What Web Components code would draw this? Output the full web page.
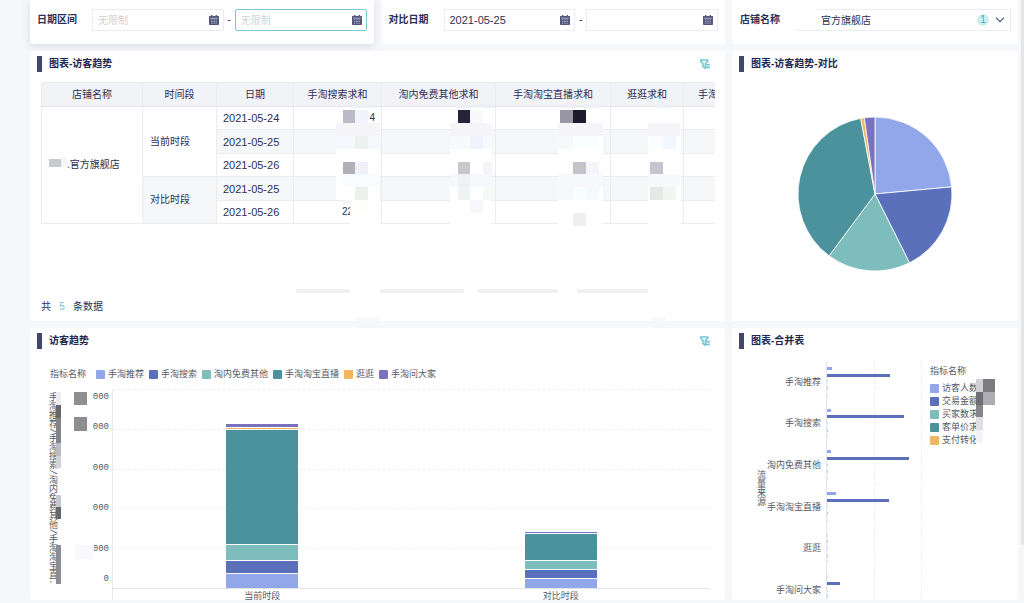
<!DOCTYPE html>
<html lang="zh-CN">
<head>
<meta charset="utf-8">
<meta name="viewport" content="width=device-width, initial-scale=1">
<title>访客趋势看板</title>
<style>
  :root {
    --ink: #2b2f56;
    --muted: #555a68;
    --line: #ebecf0;
    --accent: #6fc4d1;
    --c1: #91a7ea;
    --c2: #5b70bb;
    --c3: #7dbebc;
    --c4: #4b929d;
    --c5: #f0b75e;
    --c6: #7a72c0;
  }
  html { background: #f6f7fa; }
  body {
    margin: 0;
    font-family: "Liberation Sans", "Noto Sans CJK SC", sans-serif;
    font-size: 10px;
    line-height: 16px;
    color: var(--ink);
  }
</style>
</head>
<body>
<visitor-dashboard></visitor-dashboard>

<script>
const define = (name, html, setup) => {
  const tpl = document.createElement('template');
  tpl.innerHTML = html;
  customElements.define(name, class extends HTMLElement {
    connectedCallback() {
      if (this.shadowRoot) return;
      this.attachShadow({ mode: 'open' }).append(tpl.content.cloneNode(true));
      if (setup) setup(this, this.shadowRoot);
    }
  });
};

/* Privacy mask: "x y width height colour" cells separated by semicolons, in panel coordinates */
define('privacy-mask', `
  <style>
    :host { position: absolute; left: 0; top: 0; width: 100%; height: 100%; pointer-events: none; }
    svg { display: block; width: 100%; height: 100%; }
  </style>
  <svg aria-hidden="true" shape-rendering="crispEdges"></svg>`,
  (host, root) => {
    root.querySelector('svg').innerHTML = host.getAttribute('cells').split(';').map(s => s.trim()).filter(Boolean)
      .map(s => {
        const [x, y, w, h, c] = s.split(/\s+/);
        return `<rect x="${x}" y="${y}" width="${w}" height="${h}" fill="${c}"/>`;
      }).join('');
  });

define('filter-icon', `
  <style>
    :host { display: block; width: 10px; height: 10px; color: var(--accent); }
    svg { display: block; }
  </style>
  <svg width="10" height="10" viewBox="0 0 10 10" fill="none" stroke="currentColor" aria-hidden="true">
    <path d="M.7 1h7v1.200L5.400 4.400v4.800L3 7.600V4.400L.7 2.200z" stroke-width="1.500"/>
    <path d="M6.200 5.300h3.600M6.200 7h3.600M6.200 8.700h3.600" stroke-width="1.200"/>
  </svg>`);

define('calendar-icon', `
  <style>
    :host { display: block; width: 10px; height: 10px; flex: none; }
    svg { display: block; }
  </style>
  <svg width="10" height="10" viewBox="0 0 10 10" aria-hidden="true">
    <path d="M2 0h1.400v1h3.200V0H8v1h1.400q.6 0 .6.6v7.600q0 .8-.8.8H.8Q0 10 0 9.200V1.600Q0 1 .6 1H2z" fill="#51567a"/>
    <path d="M1.200 3.200h7.600" stroke="#c3c6d6" stroke-width=".8"/>
    <path d="M2 4.800h6M2 6.500h6M2 8.200h6" stroke="#b4b8cb" stroke-width=".8" stroke-dasharray="1.100 .5"/>
  </svg>`);

define('filter-card', `
  <style>
    :host {
      display: block; box-sizing: border-box; min-width: 0; padding: 9px 7px 13px;
      background: #fff; border-radius: 0 0 3px 3px;
    }
    :host([raised]) { box-shadow: 0 2px 8px rgba(60, 66, 100, .16); }
  </style>
  <slot></slot>`);

define('date-range', `
  <style>
    :host { display: flex; align-items: center; }
    label { flex: none; width: 55px; font-weight: bold; }
    .box {
      flex: 1; min-width: 0; display: flex; align-items: center; box-sizing: border-box;
      height: 22px; padding: 0 4px 0 5px; border: 1px solid var(--line); background: #fff;
    }
    .box.on { border-color: #79c8d6; border-radius: 2px; }
    input {
      flex: 1; min-width: 0; height: 20px; padding: 0; border: 0; outline: 0; background: none;
      font: 11px "Liberation Sans", "Noto Sans CJK SC", sans-serif; color: inherit;
    }
    input::placeholder { font-size: 10px; color: #cfd1da; opacity: 1; }
    .dash { flex: none; width: 11px; text-align: center; }
  </style>
  <label for="from"></label>
  <div class="box"><input id="from" type="text"><calendar-icon></calendar-icon></div>
  <span class="dash">-</span>
  <div class="box"><input id="to" type="text" aria-label="结束日期"><calendar-icon></calendar-icon></div>`,
  (host, root) => {
    root.querySelector('label').textContent = host.getAttribute('label');
    const [from, to] = root.querySelectorAll('input');
    from.value = host.getAttribute('from') || '';
    from.placeholder = to.placeholder = host.getAttribute('placeholder') || '';
    if (host.hasAttribute('end-active')) to.parentElement.classList.add('on');
  });

define('shop-select', `
  <style>
    :host { display: flex; align-items: center; padding-left: 1px; }
    label { flex: none; width: 56px; font-weight: bold; }
    .box { position: relative; flex: 1; min-width: 0; }
    select {
      display: block; width: 100%; height: 22px; box-sizing: border-box; padding: 0 44px 0 24px;
      appearance: none; border: 1px solid var(--line); border-radius: 2px; background: #fff;
      font: 10px "Liberation Sans", "Noto Sans CJK SC", sans-serif; color: inherit;
    }
    .adorn {
      position: absolute; right: 6px; top: 0; height: 22px; display: flex; align-items: center; gap: 6px;
      pointer-events: none;
    }
    b {
      width: 12px; height: 12px; border-radius: 6px; background: #cdeef0; color: #4aa9b8;
      font-size: 10px; line-height: 12px; font-weight: normal; text-align: center;
    }
    .veil { position: absolute; left: 0; top: 0; width: 21px; height: 20px; background: #fff; pointer-events: none; }
  </style>
  <label for="shop">店铺名称</label>
  <div class="box">
    <select id="shop"><option>官方旗舰店</option></select>
    <span class="veil"></span>
    <span class="adorn"><b>1</b>
      <svg width="10" height="6" viewBox="0 0 10 6" fill="none" stroke="#51567a" stroke-width="1.200" aria-hidden="true"><path d="M1 .7l4 4 4-4"/></svg>
    </span>
  </div>`);

define('chart-panel', `
  <style>
    :host {
      position: relative; display: flex; flex-direction: column; min-width: 0; overflow: hidden;
      background: #fff; border-radius: 3px;
    }
    header { display: flex; align-items: center; gap: 7px; height: 16px; padding: 5px 15px 10px 7px; }
    header::before { content: ""; width: 5px; height: 16px; background: #424769; }
    h2 { flex: 1; margin: 0; font-size: 10px; line-height: 18px; font-weight: bold; color: #232750; }
    button { padding: 0; border: 0; background: none; }
    .body { flex: 1; display: flex; flex-direction: column; min-height: 0; }
  </style>
  <header><h2></h2></header>
  <div class="body"><slot></slot></div>`,
  (host, root) => {
    root.querySelector('h2').textContent = host.getAttribute('heading');
    if (host.hasAttribute('filterable')) {
      const b = document.createElement('button');
      b.setAttribute('aria-label', '筛选');
      b.innerHTML = '<filter-icon></filter-icon>';
      root.querySelector('header').append(b);
    }
  });

define('visitor-table', `
  <style>
    :host { flex: 1; display: flex; flex-direction: column; padding: 0 10px 6px 11px; }
    .scroll { flex: 1; overflow: hidden; }
    table { border-collapse: collapse; table-layout: fixed; width: 757px; }
    th, td { box-sizing: border-box; height: 23px; padding: 0 6px; border: 1px solid var(--line); line-height: 16px; }
    th { height: 24px; padding: 1px 0 0; background: #f2f3f7; border-bottom-color: #e2e4e9; font-weight: normal; }
    td { font-size: 10px; text-align: right; }
    td.date { font-size: 11px; text-align: left; }
    td.name { padding: 0 7px; text-align: left; }
    td.shop { padding: 0 8px 0 25px; text-align: left; }
    tr.alt td { height: 24px; }
    tr.alt td:not(.name), td.shade { background: #f6f7f9; }
    .bar { display: flex; gap: 14px; margin: 0 67px 6px 255px; height: 4px; }
    .bar i { background: #f0f0f1; border-radius: 1px; }
    footer { display: flex; gap: 6px; }
    footer b { width: 10px; text-align: center; font-weight: normal; color: var(--accent); }
  </style>
  <div class="scroll">
    <table>
      <colgroup><col style="width:101px"><col style="width:74px"><col style="width:77px"><col style="width:88px"><col style="width:114px"><col style="width:115px"><col style="width:73px"><col style="width:115px"></colgroup>
      <thead><tr><th>店铺名称</th><th>时间段</th><th>日期</th><th>手淘搜索求和</th><th>淘内免费其他求和</th><th>手淘淘宝直播求和</th><th>逛逛求和</th><th style="padding-left:14px;text-align:left">手淘</th></tr></thead>
      <tbody>
        <tr><td class="shop" rowspan="5">.官方旗舰店</td><td class="name" rowspan="3">当前时段</td><td class="date">2021-05-24</td><td>4</td><td></td><td></td><td></td><td></td></tr>
        <tr class="alt"><td class="date">2021-05-25</td><td></td><td></td><td></td><td></td><td></td></tr>
        <tr><td class="date">2021-05-26</td><td></td><td></td><td></td><td></td><td></td></tr>
        <tr class="alt"><td class="name shade" rowspan="2">对比时段</td><td class="date">2021-05-25</td><td></td><td></td><td></td><td></td><td></td></tr>
        <tr><td class="date">2021-05-26</td><td style="padding-right:28px">22</td><td></td><td></td><td></td><td></td></tr>
      </tbody>
    </table>
  </div>
  <div class="bar"><i style="flex:54"></i><i style="flex:84;margin-left:16px"></i><i style="flex:80"></i><i style="flex:71;margin-left:5px"></i></div>
  <footer><span>共</span><b>5</b><span>条数据</span></footer>`);

define('share-pie', `
  <style>
    :host { flex: 1; display: flex; justify-content: center; align-items: flex-start; padding-top: 34px; }
    svg { display: block; width: 156px; height: 156px; }
  </style>
  <svg viewBox="-78 -78 156 156" role="img" aria-label="访客趋势对比"></svg>`,
  (host, root) => {
    const stops = [0, 84.7, 153.4, 216.6, 349.3, 352, 360];
    const at = d => {
      const a = d * Math.PI / 180;
      return `${(77 * Math.sin(a)).toFixed(2)} ${(-77 * Math.cos(a)).toFixed(2)}`;
    };
    root.querySelector('svg').innerHTML = stops.slice(1).map((end, i) =>
      `<path d="M0 0L${at(stops[i])}A77 77 0 0 1 ${at(end)}Z" fill="var(--c${i + 1})" stroke="#fff" stroke-width="1" stroke-opacity=".8"/>`).join('');
  });

define('legend-list', `
  <style>
    :host { display: flex; gap: 5px; font-size: 9px; line-height: 13px; color: var(--muted); white-space: nowrap; }
    :host([vertical]) { flex-direction: column; gap: 0; }
    .t { margin-right: 5px; }
    :host([vertical]) .t { margin: 0 0 4px; }
    .i { display: flex; align-items: center; gap: 3px; }
    .i::before { content: ""; width: 9px; height: 9px; border-radius: 1px; background: var(--s); }
  </style>`,
  (host, root) => {
    const t = document.createElement('span');
    t.className = 't';
    t.textContent = '指标名称';
    root.append(t);
    host.getAttribute('items').split(',').forEach((name, i) => {
      const el = document.createElement('span');
      el.className = 'i';
      el.style.setProperty('--s', `var(--c${i + 1})`);
      el.textContent = name;
      root.append(el);
    });
  });

define('stacked-chart', `
  <style>
    :host { display: block; padding: 9px 15px 0 18px; font-size: 9px; color: var(--muted); }
    legend-list { margin: 0 0 8px 2px; }
    .chart { display: grid; grid-template-columns: 12px 49px 1fr; grid-template-rows: 200px 12px; }
    .title {
      grid-row: 1 / 3; padding-top: 3px; writing-mode: vertical-rl; line-height: 8px; justify-self: start;
      font-family: "Liberation Mono", "Noto Sans CJK SC", monospace; white-space: nowrap;
    }
    .ticks { display: grid; grid-template-rows: 1fr 2fr 2fr 2fr 2fr 1fr; align-items: center; justify-items: end; font-family: "Liberation Mono", monospace; line-height: 12px; margin-top: -2px; }
    .plot { display: grid; margin-left: 3px; border-left: 1px solid #e9eaee; border-bottom: 1px solid #e3e4e8; }
    .plot > * { grid-area: 1 / 1; }
    .grid { display: grid; grid-template-rows: repeat(5, 1fr); }
    .grid i { border-top: 1px dashed #f2f2f5; }
    .bars { display: grid; grid-template-columns: 1fr 1fr; justify-items: center; align-items: end; }
    .bar { display: flex; flex-direction: column-reverse; gap: 1px; width: 24%; }
    .cats { grid-column: 3; display: grid; grid-template-columns: 1fr 1fr; margin-left: 3px; text-align: center; line-height: 14px; border-left: 1px solid #e9eaee; }
  </style>
  <legend-list items="手淘推荐,手淘搜索,淘内免费其他,手淘淘宝直播,逛逛,手淘问大家"></legend-list>
  <div class="chart">
    <div class="title">手淘推荐/手淘搜索/淘内免费其他/手淘淘宝直.</div>
    <div class="ticks"><span>000</span><span>000</span><span>000</span><span>000</span><span>000</span><span>0</span></div>
    <div class="plot">
      <div class="grid"><i></i><i></i><i></i><i></i><i></i></div>
      <div class="bars"></div>
    </div>
    <div class="cats"><span>当前时段</span><span>对比时段</span></div>
  </div>`,
  (host, root) => {
    const series = [[14, 12, 15, 114, 1, 3], [9, 8, 8, 26, 0, 1]];
    root.querySelector('.bars').innerHTML = series.map(s => '<div class="bar">' + s.map((v, i) =>
      v ? `<i style="height:${v}px;background:var(--c${i + 1})"></i>` : '').join('') + '</div>').join('');
  });

define('merged-chart', `
  <style>
    :host { display: grid; grid-template-columns: 89px 1fr 88px; padding: 2px 0 0 5px; font-size: 9px; color: var(--muted); }
    .left { display: grid; grid-template-columns: 16px 1fr; height: 250px; padding-right: 5px; }
    .title { writing-mode: vertical-rl; line-height: 16px; text-align: center; margin-left: 16px; padding-top: 4px; width: 16px; }
    .names { display: grid; grid-template-rows: repeat(6, 1fr); align-items: center; text-align: right; white-space: nowrap; line-height: 12px; }
    .plot { display: grid; margin-right: 8px; border-left: 1px solid #e4e5ea; }
    .plot > * { grid-area: 1 / 1; }
    .grid { display: grid; grid-template-columns: 1fr 1fr; }
    .grid i { border-right: 1px dashed #ededf1; }
    .rows { display: grid; grid-template-rows: repeat(6, 1fr); }
    .row { display: flex; flex-direction: column; justify-content: space-between; padding: 6px 0; }
    .row i { height: 3px; }
    legend-list { padding-top: 4px; }
  </style>
  <div class="left">
    <div class="title">流量来源</div>
    <div class="names"><span>手淘推荐</span><span>手淘搜索</span><span>淘内免费其他</span><span>手淘淘宝直播</span><span>逛逛</span><span>手淘问大家</span></div>
  </div>
  <div class="plot"><div class="grid"><i></i><i></i></div><div class="rows"></div></div>
  <legend-list vertical items="访客人数,交易金额,买家数求,客单价求,支付转化"></legend-list>`,
  (host, root) => {
    const data = [[5, 66], [4, 81], [4, 86], [9, 65], [0, 0], [0, 14]];
    root.querySelector('.rows').innerHTML = data.map(r => '<div class="row">' + [0, 1, 2, 3, 4].map(i => {
      const v = r[i] || 0;
      return `<i style="width:${v ? v + '%' : '1px'};opacity:${v ? 1 : .35};background:var(--c${i + 1})"></i>`;
    }).join('') + '</div>').join('');
  });

define('visitor-dashboard', `
  <style>
    :host { position: relative; display: block; padding: 0 6px 3px 30px; }
    .grid { display: grid; grid-template-columns: minmax(0, 695fr) minmax(0, 286fr); grid-template-rows: auto minmax(270px, auto) 272px; gap: 7px; }
    .pair { display: grid; grid-template-columns: minmax(0, 1fr) minmax(0, 1fr); gap: 8px; }
    .thumb { position: absolute; right: 0; top: 0; width: 3px; height: 545px; background: #e4e5e9; border-radius: 0 0 2px 2px; }
  </style>
  <main class="grid">
    <div class="pair">
      <filter-card raised><date-range label="日期区间" placeholder="无限制" end-active></date-range></filter-card>
      <filter-card><date-range label="对比日期" from="2021-05-25"></date-range></filter-card>
    </div>
    <filter-card><shop-select></shop-select></filter-card>

    <chart-panel heading="图表-访客趋势" filterable>
      <visitor-table></visitor-table>
      <privacy-mask cells="
        19 108 12 8 #c9cace; 31 106 6 10 #f5f6f9;
        320 53 22 4 #eff0f5; 306 57 31 15 #fff; 313 59 12 13 #bdbac8; 325 59 13 13 #f2f3fd;
        306 72 44 13 #f5f4f9; 306 85 44 13 #f7f8fd; 325 85 13 13 #edf2f1; 306 98 44 51 #fff;
        313 111 12 12 #b1b0b9; 325 111 13 12 #f0f0f6; 313 123 37 13 #f9fcfe; 325 136 13 13 #eef0ec;
        313 149 12 5 #f4f7fa; 320 149 30 25 #fff; 325 149 13 11 #fdfefa;
        424 53 14 4 #eff0f5; 444 53 18 4 #eff0f5; 420 57 42 117 #fff; 428 59 12 13 #25243a; 440 59 13 13 #f8f8fd;
        420 72 42 13 #f5f4f9; 420 85 42 13 #f8f9fd; 440 85 13 13 #f0f3fe;
        428 111 12 12 #c8c8cc; 453 111 9 12 #f5f5f8; 420 123 42 13 #f7f8fb; 428 123 12 13 #f0f1f3;
        428 136 12 13 #f0f3f3; 453 136 9 13 #f6faf6; 440 149 13 13 #f6f8fe;
        532 53 14 4 #eff0f5; 554 53 16 4 #eff0f5; 528 57 45 117 #fff; 530 59 13 13 #9995a4; 543 59 13 13 #1c1a2d;
        528 72 45 13 #f5f4f9; 528 85 15 13 #f6f8f9; 543 85 26 13 #f9feff;
        543 111 13 12 #c3c2ca; 556 111 13 12 #f5f4fa; 528 123 45 13 #f7f8fb;
        528 136 15 13 #f6f9f9; 543 136 13 13 #f8fdff; 556 136 13 13 #f6faff; 543 162 13 13 #efeff0;
        624 53 14 4 #eff0f5; 618 57 33 117 #fff; 618 72 32 13 #f5f4f9; 620 85 13 13 #fbfdff; 633 85 13 13 #f2f6fe;
        620 111 13 12 #c6c4d1; 618 123 32 13 #f8f9fb; 620 136 13 13 #e4e8e6; 633 136 13 13 #f3f6f0;
        325 266 24 4 #f9f9fb; 622 266 14 4 #f9f9fb"></privacy-mask>
    </chart-panel>
    <chart-panel heading="图表-访客趋势-对比"><share-pie></share-pie></chart-panel>

    <chart-panel heading="访客趋势" filterable>
      <stacked-chart></stacked-chart>
      <privacy-mask cells="
        44 64 13 13 #8d8f92; 44 89 13 14 #8d8e92; 44 217 20 14 #f9f9fd;
        26 64 5 13 #ececee; 26 77 5 13 #66676b; 26 90 5 25 #828387; 26 115 5 13 #bbbbc2; 26 128 5 12 #d3d4d8;
        26 167 5 12 #c8c9cd; 26 179 5 12 #66676b; 26 217 5 39 #8c8d92"></privacy-mask>
    </chart-panel>
    <chart-panel heading="图表-合并表">
      <merged-chart></merged-chart>
      <privacy-mask cells="
        244 51 10 72 #fff; 244 51 7 13 #cfd1d4; 251 51 12 13 #7c7c80; 244 64 7 13 #6f6e76; 251 64 12 13 #adacb2;
        244 77 7 12 #86858c; 244 89 7 13 #e0e0e4; 244 102 7 13 #f4f4f8"></privacy-mask>
    </chart-panel>
  </main>
  <div class="thumb"></div>`);
</script>
</body>
</html>
